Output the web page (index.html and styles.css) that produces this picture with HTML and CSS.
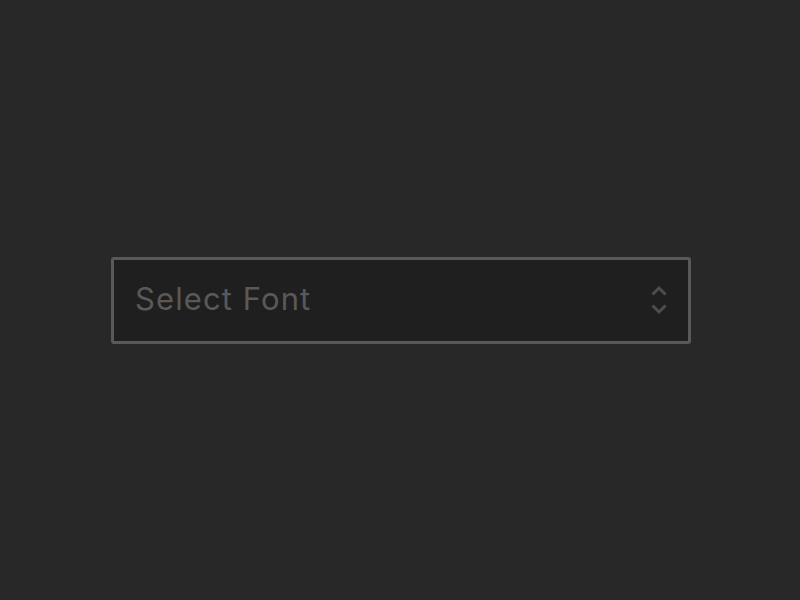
FILE: index.html
```html
<!DOCTYPE html>
<html lang="en">

<head>
    <meta charset="UTF-8">
    <meta name="viewport" content="width=device-width, initial-scale=1.0">
    <title>Select Font</title>
    <link rel="stylesheet" href="styles.css">
</head>

<body>
    <div class="select">
        <span class="label">Select Font</span>
        <svg class="arrows" width="16" height="32" viewBox="0 0 16 32">
            <polyline points="1.5,10.5 8,4 14.5,10.5" />
            <polyline points="1.5,21.5 8,28 14.5,21.5" />
        </svg>
    </div>
</body>

</html>
```

FILE: styles.css
```css
* {
    margin: 0;
    padding: 0;
    box-sizing: border-box;
}

html,
body {
    height: 100%;
}

body {
    background-color: #282828;
    display: flex;
    align-items: center;
    justify-content: center;
    font-family: Inter, "Liberation Sans", sans-serif;
}

.select {
    width: 580px;
    height: 87px;
    margin-left: 2px;
    border: 3px solid #595959;
    border-radius: 3px;
    background-color: #1f1f1f;
    display: flex;
    align-items: center;
    justify-content: space-between;
    padding: 0 21px 3px 21px;
    cursor: pointer;
}

.label {
    font-size: 31px;
    letter-spacing: 1.1px;
    color: #595959;
}

.arrows {
    margin-top: 3px;
}

.arrows polyline {
    fill: none;
    stroke: #4d4d4d;
    stroke-width: 3;
}
```
